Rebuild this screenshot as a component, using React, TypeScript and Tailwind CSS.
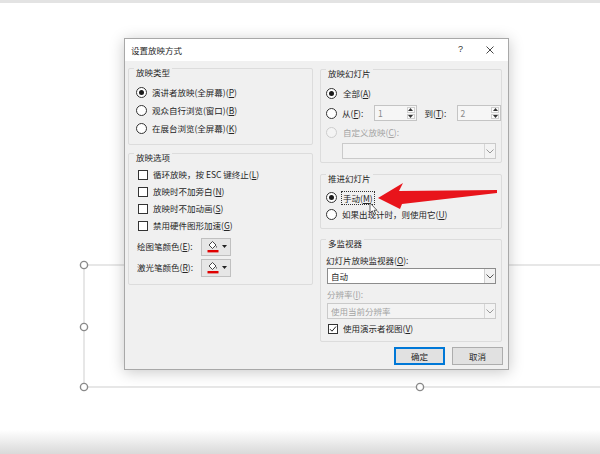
import React from "react";

function Radio({ checked = false, disabled = false }: { checked?: boolean; disabled?: boolean }) {
  return (
    <span
      className={`w-[11px] h-[11px] rounded-full border flex items-center justify-center shrink-0 ${
        disabled ? "border-[#cdcdcd] bg-[#f4f4f4]" : "border-[#333333] bg-white"
      }`}
    >
      {checked && <span className="w-[5px] h-[5px] rounded-full bg-[#1a1a1a]" />}
    </span>
  );
}

function Check({ checked = false }: { checked?: boolean }) {
  return (
    <span className="w-[10px] h-[10px] border border-[#333333] bg-white flex items-center justify-center shrink-0">
      {checked && (
        <svg width="8" height="8" viewBox="0 0 8 8">
          <path d="M1 4.2 L3 6.2 L7 1.5" fill="none" stroke="#222" strokeWidth="1" />
        </svg>
      )}
    </span>
  );
}

function U({ c }: { c: string }) {
  return <span className="underline underline-offset-1">{c}</span>;
}

function Group({ title, className, children }: { title: string; className: string; children?: React.ReactNode }) {
  return (
    <div className={`border border-[#dcdcdc] rounded-[2px] flex flex-col ${className}`}>
      <div className="-mt-[3px] ml-[5px] px-[2px] bg-[#f0f0f0] w-fit leading-[12px]">{title}</div>
      {children}
    </div>
  );
}

function Chevron({ color = "#555" }: { color?: string }) {
  return (
    <svg width="8" height="5" viewBox="0 0 8 5">
      <path d="M0.5 0.5 L4 4 L7.5 0.5" fill="none" stroke={color} strokeWidth="1" />
    </svg>
  );
}

function Spin({ value }: { value: string }) {
  return (
    <div className="h-[16px] border border-[#c4c4c4] bg-[#f6f6f6] flex">
      <div className="flex-1 pl-[3px] text-[#8a8a8a] leading-[14px]">{value}</div>
      <div className="w-[9px] flex flex-col gap-[1px] py-[1px] pr-[1px]">
        <div className="flex-1 border border-[#cfcfcf] bg-[#fbfbfb] flex items-center justify-center">
          <svg width="5" height="3" viewBox="0 0 5 3">
            <path d="M0 3 L2.5 0 L5 3 Z" fill="#333" />
          </svg>
        </div>
        <div className="flex-1 border border-[#cfcfcf] bg-[#fbfbfb] flex items-center justify-center">
          <svg width="5" height="3" viewBox="0 0 5 3">
            <path d="M0 0 L2.5 3 L5 0 Z" fill="#333" />
          </svg>
        </div>
      </div>
    </div>
  );
}

function ColorBtn() {
  return (
    <div className="w-[30px] h-[18px] border border-[#c0c0c0] bg-[#e6e6e6] flex items-center pl-[5px] gap-[3px]">
      <svg width="12" height="13" viewBox="0 0 12 13">
        <path d="M2 5 L5.5 1.5 L9 5 L5.5 8.5 Z" fill="white" stroke="#333" strokeWidth="0.9" />
        <path d="M9.6 5.8 Q10.6 7.3 9.6 7.8 Q8.6 7.3 9.6 5.8 Z" fill="#333" />
        <rect x="0.5" y="10" width="11" height="2.4" fill="#e00000" />
      </svg>
      <svg width="5" height="3" viewBox="0 0 5 3">
        <path d="M0 0 L2.5 3 L5 0 Z" fill="#222" />
      </svg>
    </div>
  );
}

export default function App() {
  return (
    <div className="relative w-[600px] h-[454px] bg-white overflow-hidden flex flex-col font-['Noto_Sans_CJK_SC','Noto_Sans',sans-serif] text-[8.5px] text-[#262626]">
      <div className="h-[3px] bg-[#e3e3e3]" />
      <div className="flex-1" />
      <div className="h-[24px] bg-gradient-to-b from-white to-[#d9d9d9]" />

      {/* selection frame on slide canvas */}
      <svg className="absolute left-0 top-0" width="600" height="454" viewBox="0 0 600 454">
        <path d="M84 265 H600 M84 387 H600 M84 265 V387" stroke="#cfcfcf" strokeWidth="1" fill="none" />
        {[
          [84, 265],
          [84, 327],
          [84, 387],
          [420, 387],
        ].map(([x, y]) => (
          <circle key={`${x}-${y}`} cx={x} cy={y} r="3.6" fill="white" stroke="#8a8a8a" strokeWidth="1.4" />
        ))}
      </svg>

      {/* dialog window */}
      <div className="absolute left-[124px] top-[38px] w-[385px] h-[332px] border border-[#a8a8a8] bg-[#f0f0f0] flex flex-col shadow-[0_2px_14px_rgba(0,0,0,0.22)]">
        <div className="h-[22px] bg-white flex items-center pl-[6px] shrink-0">
          <span className="leading-[12px]">设置放映方式</span>
          <span className="ml-auto mr-[23px] text-[9px] text-[#333] font-['Liberation_Sans',sans-serif]">?</span>
          <svg className="mr-[14px]" width="8" height="8" viewBox="0 0 8 8">
            <path d="M0.5 0.5 L7.5 7.5 M7.5 0.5 L0.5 7.5" stroke="#333" strokeWidth="0.9" />
          </svg>
        </div>

        <div className="flex-1 flex gap-[7px] pl-[3px] pr-[6px] pt-[7px]">
          {/* left column */}
          <div className="w-[185px] flex flex-col gap-[8px]">
            <Group title="放映类型" className="h-[77px]">
              <div className="mt-[5px] flex flex-col">
                <div className="h-[18px] flex items-center pl-[7px] gap-[5px]">
                  <Radio checked />
                  <span>演讲者放映(全屏幕)(<U c="P" />)</span>
                </div>
                <div className="h-[18px] flex items-center pl-[7px] gap-[5px]">
                  <Radio />
                  <span>观众自行浏览(窗口)(<U c="B" />)</span>
                </div>
                <div className="h-[18px] flex items-center pl-[7px] gap-[5px]">
                  <Radio />
                  <span>在展台浏览(全屏幕)(<U c="K" />)</span>
                </div>
              </div>
            </Group>

            <Group title="放映选项" className="h-[132px]">
              <div className="mt-[3px] flex flex-col">
                <div className="h-[17px] flex items-center pl-[9px] gap-[5px]">
                  <Check />
                  <span>循环放映，按 ESC 键终止(<U c="L" />)</span>
                </div>
                <div className="h-[17px] flex items-center pl-[9px] gap-[5px]">
                  <Check />
                  <span>放映时不加旁白(<U c="N" />)</span>
                </div>
                <div className="h-[17px] flex items-center pl-[9px] gap-[5px]">
                  <Check />
                  <span>放映时不加动画(<U c="S" />)</span>
                </div>
                <div className="h-[17px] flex items-center pl-[9px] gap-[5px]">
                  <Check />
                  <span>禁用硬件图形加速(<U c="G" />)</span>
                </div>
              </div>
              <div className="mt-[3px] flex flex-col gap-[2px]">
                <div className="h-[19px] flex items-center pl-[8px]">
                  <span className="w-[64px]">绘图笔颜色(<U c="E" />):</span>
                  <ColorBtn />
                </div>
                <div className="h-[19px] flex items-center pl-[8px]">
                  <span className="w-[64px]">激光笔颜色(<U c="R" />):</span>
                  <ColorBtn />
                </div>
              </div>
            </Group>
          </div>

          {/* right column */}
          <div className="w-[182px] flex flex-col">
            <Group title="放映幻灯片" className="h-[94px] mt-[1px]">
              <div className="mt-[4px] flex flex-col">
                <div className="h-[20px] flex items-center pl-[5px] gap-[6px]">
                  <Radio checked />
                  <span>全部(<U c="A" />)</span>
                </div>
                <div className="h-[20px] flex items-center pl-[5px] gap-[5px]">
                  <Radio />
                  <span className="w-[28px]">从(<U c="F" />):</span>
                  <div className="w-[44px]">
                    <Spin value="1" />
                  </div>
                  <span className="ml-[3px] w-[28px]">到(<U c="T" />):</span>
                  <div className="w-[46px]">
                    <Spin value="2" />
                  </div>
                </div>
                <div className="h-[18px] flex items-center pl-[5px] gap-[6px] text-[#a3a3a3]">
                  <Radio disabled />
                  <span>自定义放映(<U c="C" />):</span>
                </div>
                <div className="ml-[21px] mt-[2px] w-[154px] h-[16px] border border-[#cacaca] bg-[#f3f3f3] flex justify-end">
                  <div className="w-[11px] border-l border-[#d6d6d6] flex items-center justify-center">
                    <Chevron color="#999" />
                  </div>
                </div>
              </div>
            </Group>

            <Group title="推进幻灯片" className="h-[55px] mt-[11px]">
              <div className="mt-[5px] flex flex-col">
                <div className="h-[17px] flex items-center pl-[5px] gap-[4px]">
                  <Radio checked />
                  <span className="border border-dotted border-[#333] px-[1px] leading-[12px]">
                    手动(<U c="M" />)
                  </span>
                </div>
                <div className="h-[17px] flex items-center pl-[5px] gap-[5px]">
                  <Radio />
                  <span>如果出现计时，则使用它(<U c="U" />)</span>
                </div>
              </div>
            </Group>

            <Group title="多监视器" className="h-[103px] mt-[10px]">
              <div className="mt-[5px] pl-[5px] leading-[12px]">幻灯片放映监视器(<U c="O" />):</div>
              <div className="ml-[6px] mt-[2px] w-[169px] h-[16px] border border-[#8c8c8c] bg-white flex items-center">
                <span className="flex-1 pl-[3px]">自动</span>
                <div className="w-[11px] h-full border-l border-[#cfcfcf] bg-[#f2f2f2] flex items-center justify-center">
                  <Chevron />
                </div>
              </div>
              <div className="mt-[4px] pl-[6px] leading-[12px] text-[#a3a3a3]">分辨率(<U c="I" />):</div>
              <div className="ml-[6px] mt-[3px] w-[169px] h-[16px] border border-[#cacaca] bg-[#f3f3f3] flex items-center text-[#a3a3a3]">
                <span className="flex-1 pl-[3px]">使用当前分辨率</span>
                <div className="w-[11px] h-full border-l border-[#d6d6d6] flex items-center justify-center">
                  <Chevron color="#999" />
                </div>
              </div>
              <div className="mt-[2px] h-[15px] flex items-center pl-[7px] gap-[5px]">
                <Check checked />
                <span>使用演示者视图(<U c="V" />)</span>
              </div>
            </Group>

            <div className="mt-[5px] flex justify-end gap-[7px] -mr-[1px]">
              <div className="w-[51px] h-[18px] border border-[#0078d7] bg-[#e1e1e1] flex items-center justify-center shadow-[inset_0_0_0_1px_#0078d7]">
                确定
              </div>
              <div className="w-[51px] h-[18px] border border-[#adadad] bg-[#e1e1e1] flex items-center justify-center">
                取消
              </div>
            </div>
          </div>
        </div>
      </div>

      {/* red annotation arrow + cursor */}
      <svg className="absolute left-0 top-0 pointer-events-none" width="600" height="454" viewBox="0 0 600 454">
        <polygon
          points="378,198 403,183 399,191 497,190 497,193 402,204 400,209"
          fill="#e8141b"
        />
        <path d="M370 203 L370 213 L372.3 210.8 L374 214.5 L375.6 213.8 L374 210.3 L377 210.3 Z" fill="white" stroke="#222" strokeWidth="0.7" />
      </svg>
    </div>
  );
}
